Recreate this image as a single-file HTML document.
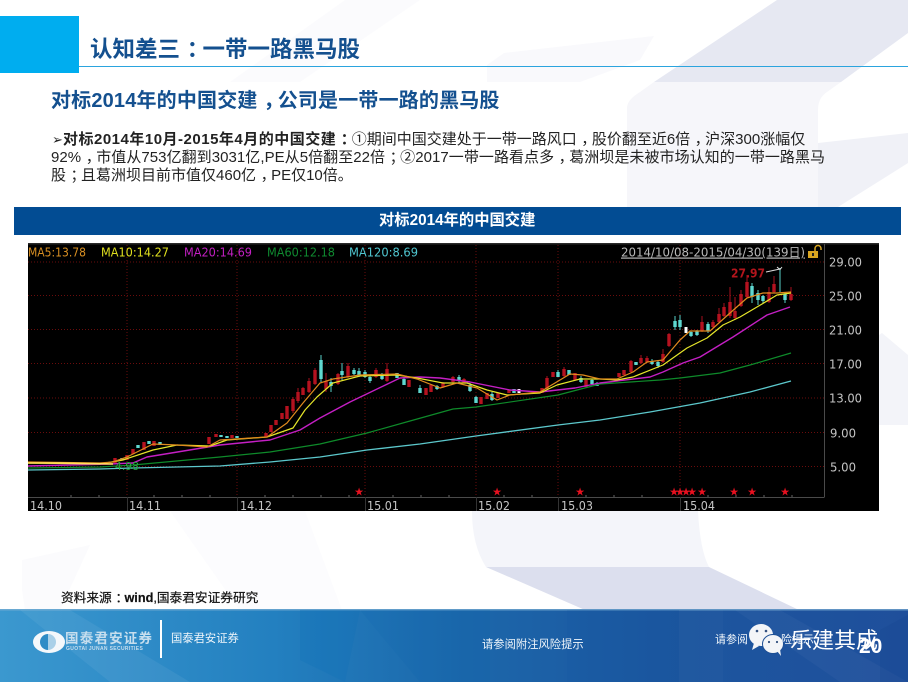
<!DOCTYPE html>
<html lang="zh-CN">
<head>
<meta charset="utf-8">
<title>认知差三：一带一路黑马股</title>
<style>
html,body{margin:0;padding:0;background:#fff}
#p{position:relative;width:908px;height:682px;overflow:hidden;background:#fff;font-family:"Liberation Sans","Noto Sans CJK SC",sans-serif}
#p svg{position:absolute;left:0;top:0}
.t{position:absolute;white-space:nowrap;line-height:1}
.c{position:relative;left:.3em}
</style>
</head>
<body>
<div id="p">
<svg width="908" height="682" viewBox="0 0 908 682">
<defs>
<linearGradient id="ft" x1="0" y1="0" x2="1" y2="0">
<stop offset="0" stop-color="#3b98cf"/><stop offset=".3" stop-color="#2380c0"/><stop offset=".5" stop-color="#1c68ab"/><stop offset=".72" stop-color="#1c57a0"/><stop offset="1" stop-color="#1f4f9b"/>
</linearGradient>
</defs>
<!-- background shapes -->
<polygon points="230,82 345,0 420,0 300,82" fill="#fbfbfd"/>
<polygon points="487,65 504,53 654,36 640,60 580,82 487,82" fill="#f9f9fc"/>
<polygon points="654,82 777,0 908,0 908,33 841,82" fill="#e6e8f2"/>
<path d="M627,207 V108 Q627,100 640,92 L654,82 H841 L827,92 Q818,98 818,110 V207 Z" fill="#f6f6fa"/>
<polygon points="818,143 908,133 908,163 838,207 818,207" fill="#f0f1f7"/>
<path d="M882,333 L908,355 V425 H879 V335 Z" fill="#f3f4f9"/>
<path d="M472,511 H698 Q700,550 709,567 H486 Q472,545 472,511 Z" fill="#f4f5fa"/>
<polygon points="486,567 709,567 799,610 585,610" fill="#dcdfee"/>
<polygon points="170,511 305,511 355,645 250,625" fill="#fcfcfe"/>
<polygon points="22,590 22,560 90,545 60,610 25,610" fill="#fbfbfd"/>
<!-- header -->
<rect x="0" y="16" width="79" height="57" fill="#00adef"/>
<rect x="79" y="66" width="829" height="1" fill="#2ba4de"/>
<rect x="14" y="207" width="887" height="28" fill="#024c93"/>
<!-- chart -->
<rect x="28" y="243" width="851" height="268" fill="#000"/>
<rect x="28" y="243" width="851" height="1.5" fill="#2a2a2a"/>
<g stroke="#6a0c0c" stroke-width="1" stroke-dasharray="1 2" fill="none">
<path d="M28,262H824M28,295.5H824M28,329.5H824M28,363.5H824M28,398H824M28,432.5H824M28,466.5H824"/>
<path d="M127,245V497M237,245V497M365,245V497M476,245V497M558,245V497M680,245V497"/>
</g>
<path d="M28,497.5H824M824.5,244V497.5" stroke="#4a4a4a" fill="none"/>
<path d="M127.5,497V511M237.5,497V511M365.5,497V511M476.5,497V511M558.5,497V511M680.5,497V511" stroke="#333" fill="none"/>
<path d="M71,497v-2M99,497v-2M154,497v-2M182,497v-2M210,497v-2M265,497v-2M293,497v-2M321,497v-2M349,497v-2M393,497v-2M421,497v-2M449,497v-2M504,497v-2M532,497v-2M586,497v-2M614,497v-2M642,497v-2M708,497v-2M736,497v-2M764,497v-2M792,497v-2" stroke="#666" fill="none"/>
<!-- candles: red -->
<path stroke="#a8101e" stroke-width="1" fill="none" d="M293,397V413M298,388V403M303,387V395M309,378V393M315,368V385M326,373V392M338,373V385M348,363V378M376,368V378M387,363V382M443,382V388M453,376V383M464,378V383M547,376V390M564,367V377M631,360V373M641,355V364M647,356V363M663,349V363M669,333V347M702,316V332M713,320V328M719,308V323M724,303V317M730,287V318M735,297V320M741,290V307M747,275V298M769,287V303M774,276V293M791,287V301"/>
<path stroke="#b5121f" stroke-width="3.4" fill="none" d="M115,458V463M127,455V460M133,449V454M144,442V450M154,441V446M209,437V444M216,434V437M232,435V438M266,433V437M271,425V432M276,420V425M282,413V419M287,406V419M293,399V411M298,392V401M303,388V395M309,381V392M315,370V384M326,381V389M338,374V384M348,366V377M376,370V377M387,369V381M409,380V387M426,388V395M431,385V392M443,383V387M453,377V382M464,379V383M481,397V404M487,393V399M498,393V398M509,390V393M542,388V393M547,378V389M553,372V377M564,369V376M575,373V380M586,380V387M619,373V377M624,370V375M631,361V372M641,358V363M647,358V362M663,354V362M669,334V346M702,322V331M713,322V327M719,314V322M724,307V316M730,302V316M735,311V318M741,294V306M747,282V297M769,292V302M774,284V292M791,294V300"/>
<!-- candles: cyan -->
<path stroke="#58cfc8" stroke-width="1" fill="none" d="M321,355V382M331,378V392M342,363V380M354,368V375M359,368V377M365,370V378M370,375V383M382,373V380M404,377V385M420,385V393M437,385V390M459,375V383M470,383V392M476,396V403M492,392V401M558,370V377M569,370V375M581,376V383M592,379V385M597,382V386M636,362V365M652,359V365M658,360V368M675,316V330M680,315V330M691,331V337M697,330V336M708,322V333M752,283V303M758,290V305M763,295V303M780,268V292M785,292V303"/>
<path stroke="#5fd8d0" stroke-width="3.4" fill="none" d="M122,458V460M138,445V448M149,441V444M160,442V445M221,435V437M227,436V438M237,436V438M321,360V379M331,382V386M342,371V375M354,370V374M359,371V376M365,372V377M370,377V381M382,375V379M397,373V378M404,379V385M420,388V393M437,386V389M459,377V381M470,385V391M476,397V403M492,394V400M514,389V393M558,372V377M569,370V375M581,378V382M592,380V384M597,383V386M636,362V365M652,361V364M658,362V366M675,321V327M680,320V327M691,332V336M697,331V335M708,324V331M752,286V297M758,293V300M763,296V301M785,294V300"/>
<path stroke="#fff" stroke-width="3" fill="none" d="M519,389V393M686,327V333"/>
<!-- MAs -->
<g fill="none" stroke-linejoin="round">
<polyline stroke="#5cc8cc" stroke-width="1.3" points="28,470 100,469 133,468 220,466 270,462 320,457 367,450 420,444 476,436 558,425 600,420 650,412 700,403 750,392 791,381"/>
<polyline stroke="#0e8a2a" stroke-width="1.2" points="28,468 100,467 133,465 220,457 270,452 320,444 367,433 410,421 453,409 476,407 558,395 600,384 660,380 680,378 720,373 750,365 791,353"/>
<polyline stroke="#c41fc4" stroke-width="1.4" points="28,466 110,464 133,463 147,457 220,445 270,440 300,430 320,418 350,402 400,378 420,377 440,378 470,382 510,390 540,392 575,388 600,383 650,377 663,372 683,363 700,357 733,337 767,315 790,307"/>
<polyline stroke="#e6e62a" stroke-width="1.2" points="28,463 100,464 123,460 153,450 177,445 210,446 227,440 267,437 293,428 305,410 317,397 333,383 360,376 397,375 417,378 443,383 467,383 487,390 507,395 540,393 557,385 580,379 600,379 617,380 633,377 663,365 687,348 707,338 723,325 740,317 757,307 777,295 791,293"/>
<polyline stroke="#e08a1e" stroke-width="1.2" points="28,462 100,463 113,462 127,457 153,444 177,445 207,447 220,440 267,437 287,423 303,403 320,383 333,379 360,375 397,374 417,379 440,388 457,383 477,388 497,400 510,395 540,392 570,374 583,375 600,379 617,379 633,372 647,362 663,360 680,340 690,331 710,331 730,313 747,298 763,293 777,293 791,292"/>
<polyline stroke="#ffe15a" stroke-width="1.4" points="28,463 60,463 113,464"/>
</g>
<path d="M766,272L780,269M777,267l3,2.5l2,-2.5" fill="none" stroke="#ddd"/>
<!-- chart text -->
<g font-family="'DejaVu Sans','Liberation Sans',sans-serif" font-size="12">
<text x="28" y="256.5" fill="#d88f22" textLength="58" lengthAdjust="spacingAndGlyphs">MA5:13.78</text>
<text x="101" y="256.5" fill="#e0e01e" textLength="68" lengthAdjust="spacingAndGlyphs">MA10:14.27</text>
<text x="184" y="256.5" fill="#c31fc3" textLength="68" lengthAdjust="spacingAndGlyphs">MA20:14.69</text>
<text x="267" y="256.5" fill="#0f8a30" textLength="68" lengthAdjust="spacingAndGlyphs">MA60:12.18</text>
<text x="349" y="256.5" fill="#4fc6d0" textLength="69" lengthAdjust="spacingAndGlyphs">MA120:8.69</text>
</g>
<text x="621" y="256.5" fill="#b8b8b8" font-family="'DejaVu Sans','Noto Sans CJK SC',sans-serif" font-size="12" text-decoration="underline" textLength="184" lengthAdjust="spacingAndGlyphs">2014/10/08-2015/04/30(139日)</text>
<rect x="808" y="251" width="10" height="7" fill="#d9a520"/>
<path d="M815,251v-2.5a3,3 0 0 1 6,0v1.5" fill="none" stroke="#d9a520" stroke-width="1.5"/>
<rect x="812" y="253" width="2" height="3" fill="#222"/>
<g font-family="'DejaVu Sans','Liberation Sans',sans-serif" font-size="12.5" fill="#c4c4c4">
<text x="829" y="266.5" textLength="33" lengthAdjust="spacingAndGlyphs">29.00</text>
<text x="829" y="300.5" textLength="33" lengthAdjust="spacingAndGlyphs">25.00</text>
<text x="829" y="334.5" textLength="33" lengthAdjust="spacingAndGlyphs">21.00</text>
<text x="829" y="368.5" textLength="33" lengthAdjust="spacingAndGlyphs">17.00</text>
<text x="829" y="402.5" textLength="33" lengthAdjust="spacingAndGlyphs">13.00</text>
<text x="830" y="437.5" textLength="26" lengthAdjust="spacingAndGlyphs">9.00</text>
<text x="830" y="471.5" textLength="26" lengthAdjust="spacingAndGlyphs">5.00</text>
<text x="30" y="510" textLength="32" lengthAdjust="spacingAndGlyphs">14.10</text>
<text x="129" y="510" textLength="32" lengthAdjust="spacingAndGlyphs">14.11</text>
<text x="240" y="510" textLength="32" lengthAdjust="spacingAndGlyphs">14.12</text>
<text x="367" y="510" textLength="32" lengthAdjust="spacingAndGlyphs">15.01</text>
<text x="478" y="510" textLength="32" lengthAdjust="spacingAndGlyphs">15.02</text>
<text x="561" y="510" textLength="32" lengthAdjust="spacingAndGlyphs">15.03</text>
<text x="683" y="510" textLength="32" lengthAdjust="spacingAndGlyphs">15.04</text>
</g>
<text x="731" y="277.5" fill="#b3151c" font-family="'DejaVu Sans',sans-serif" font-size="12.5" font-weight="bold" textLength="34" lengthAdjust="spacingAndGlyphs">27.97</text>
<text x="115" y="470" fill="#1fa83a" font-family="'DejaVu Sans',sans-serif" font-size="11" textLength="24" lengthAdjust="spacingAndGlyphs">4.98</text>
<g fill="#e8101f" font-family="'DejaVu Sans',sans-serif" font-size="11" text-anchor="middle">
<text x="359" y="495.5">★</text><text x="497" y="495.5">★</text><text x="580" y="495.5">★</text><text x="674" y="495.5">★</text><text x="680" y="495.5">★</text><text x="686" y="495.5">★</text><text x="692" y="495.5">★</text><text x="702" y="495.5">★</text><text x="734" y="495.5">★</text><text x="752" y="495.5">★</text><text x="785" y="495.5">★</text>
</g>
<!-- footer -->
<rect x="0" y="609" width="908" height="73" fill="url(#ft)"/>
<rect x="0" y="609" width="908" height="1.5" fill="#7fb0d4" opacity=".7"/>
<polygon points="20,610 70,610 190,682 110,682" fill="#fff" opacity=".06"/>
<polygon points="300,610 360,610 345,682 300,660" fill="#0b70b8" opacity=".25"/>
<polygon points="360,610 490,610 490,682 420,682" fill="#0e66ae" opacity=".15"/>
<rect x="567" y="610" width="112" height="72" fill="#0e4f9b" opacity=".12"/>
<rect x="679" y="610" width="44" height="72" fill="#fff" opacity=".02"/>
<polygon points="735,610 780,610 908,682 840,682" fill="#fff" opacity=".03"/>
<polygon points="880,630 908,615 908,682 880,682" fill="#12418e" opacity=".2"/>
<!-- logo -->
<ellipse cx="49" cy="642" rx="16" ry="11" fill="#f4f8fb"/>
<path d="M48,634 a8,8 0 0 0 0,16 z" fill="#2e8cc6"/>
<path d="M48,634 a8,8 0 0 1 0,16 z" fill="#a9d0e8"/>
<rect x="160" y="620" width="2" height="38" fill="#fff"/>
<!-- wechat -->
<ellipse cx="761" cy="635" rx="12" ry="11" fill="#f3f5f8"/>
<path d="M754,643l-2,7l7,-4z" fill="#f3f5f8"/>
<circle cx="757" cy="631" r="1.3" fill="#33507f"/><circle cx="766" cy="631" r="1.3" fill="#33507f"/>
<ellipse cx="773" cy="644" rx="10.5" ry="9.5" fill="#f3f5f8" stroke="#1d4f95" stroke-width="1"/>
<path d="M777,651l4,5l-1,-7z" fill="#f3f5f8"/>
<circle cx="769" cy="642" r="1.1" fill="#33507f"/><circle cx="777" cy="642" r="1.1" fill="#33507f"/>
</svg>

<div class="t" style="left:90px;top:39px;font-size:22.5px;font-weight:700;color:#14508f">认知差三<span class="c">：</span>一带一路黑马股</div>
<div class="t" style="left:51px;top:91px;font-size:20px;font-weight:700;color:#14508f;letter-spacing:.17px">对标2014年的中国交建<span class="c">，</span>公司是一带一路的黑马股</div>
<div class="t" style="left:52px;top:132px;font-size:15px;color:#222"><span style="display:inline-block;width:11px;font-family:'DejaVu Sans',sans-serif;font-size:13px;font-weight:700">➢</span><b style="letter-spacing:.5px">对标2014年10月-2015年4月的中国交建<span class="c">：</span></b>①期间中国交建处于一带一路风口<span class="c">，</span>股价翻至近6倍<span class="c">，</span>沪深300涨幅仅</div>
<div class="t" style="left:51px;top:150px;font-size:15px;color:#222;letter-spacing:.05px">92%<span class="c">，</span>市值从753亿翻到3031亿,PE从5倍翻至22倍<span class="c">；</span>②2017一带一路看点多<span class="c">，</span>葛洲坝是未被市场认知的一带一路黑马</div>
<div class="t" style="left:51px;top:168px;font-size:15px;color:#222">股<span class="c">；</span>且葛洲坝目前市值仅460亿<span class="c">，</span>PE仅10倍。</div>
<div class="t" style="left:379px;top:213px;font-size:15.3px;font-weight:700;color:#fff">对标2014年的中国交建</div>
<div class="t" style="left:61px;top:592px;font-size:12.7px;color:#111;-webkit-text-stroke:.2px #111">资料来源<span class="c">：</span><b>wind</b>,国泰君安证券研究</div>
<div class="t" style="left:65px;top:632px;font-size:13.5px;letter-spacing:1.2px;color:#c6deee;font-weight:700">国泰君安证券</div>
<div class="t" style="left:66px;top:647px;font-size:5px;letter-spacing:.35px;color:#c6deee;font-weight:700">GUOTAI JUNAN SECURITIES</div>
<div class="t" style="left:171px;top:634px;font-size:11.3px;color:#f0f6fb">国泰君安证券</div>
<div class="t" style="left:482px;top:640px;font-size:11.3px;color:#f0f6fb">请参阅附注风险提示</div>
<div class="t" style="left:715px;top:635px;font-size:11px;color:#f0f6fb">请参阅</div>
<div class="t" style="left:781px;top:635px;font-size:11px;color:#f0f6fb">险提示</div>
<div class="t" style="left:859px;top:636px;font-size:21px;font-weight:700;color:#fff">20</div>
<div class="t" style="left:790px;top:630px;font-size:22px;color:#fff">乐建其成</div>
</div>
</body>
</html>
